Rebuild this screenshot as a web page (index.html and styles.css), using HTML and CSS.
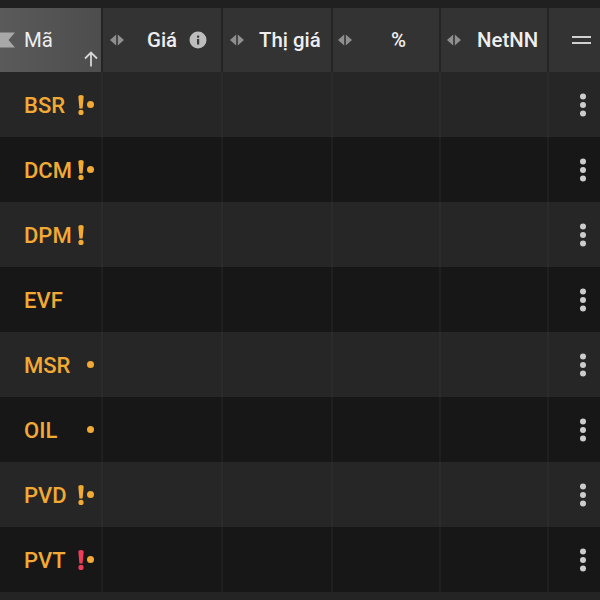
FILE: index.html
```html
<!DOCTYPE html>
<html>
    <head>
        <title>Watchlist</title>
        <link rel="stylesheet" href="styles.css">
    </head>
    <body>
        <div class="topbar"></div>
        <div class="table">
            <div class="head sorted">
                <svg class="flag" width="16" height="16" viewBox="0 0 16 16"><path d="M0 0.5H15L8.5 8L15 15.5H0Z" fill="#a8a8a8"/></svg>
                <span class="title">Mã</span>
                <svg class="up" width="16" height="16" viewBox="0 0 16 16"><path d="M8 15.5V1.5M2 7.5L8 1.5L14 7.5" fill="none" stroke="#d6d6d6" stroke-width="1.8"/></svg>
            </div>
            <div class="head gia">
                <svg class="move" width="14" height="12" viewBox="0 0 14 12"><path d="M6.2 0.5V11.5L0 6ZM7.8 0.5V11.5L14 6Z" fill="#8f8f8f"/></svg>
                <span class="title">Giá</span>
                <svg class="info" width="18" height="18" viewBox="0 0 18 18"><circle cx="9" cy="9" r="8.5" fill="#bdbdbd"/><rect x="8" y="8" width="2.2" height="5.5" fill="#3a3a3a"/><rect x="8" y="4.6" width="2.2" height="2.1" fill="#3a3a3a"/></svg>
            </div>
            <div class="head">
                <svg class="move" width="14" height="12" viewBox="0 0 14 12"><path d="M6.2 0.5V11.5L0 6ZM7.8 0.5V11.5L14 6Z" fill="#8f8f8f"/></svg>
                <span class="title">Thị giá</span>
            </div>
            <div class="head pct-col">
                <svg class="move" width="14" height="12" viewBox="0 0 14 12"><path d="M6.2 0.5V11.5L0 6ZM7.8 0.5V11.5L14 6Z" fill="#8f8f8f"/></svg>
                <span class="title">%</span>
            </div>
            <div class="head net-col">
                <svg class="move" width="14" height="12" viewBox="0 0 14 12"><path d="M6.2 0.5V11.5L0 6ZM7.8 0.5V11.5L14 6Z" fill="#8f8f8f"/></svg>
                <span class="title">NetNN</span>
            </div>
            <div class="head menu"><span class="bars"></span></div>

            <div class="cell code light"><span class="sym">BSR</span><svg class="bang" width="6" height="20" viewBox="0 0 6 20"><path d="M0.3 1.5Q0.3 0 3 0Q5.7 0 5.7 1.5L4.6 13.5H1.4ZM3 14.8A2.6 2.6 0 1 1 3 20A2.6 2.6 0 1 1 3 14.8Z"/></svg><span class="dot"></span></div>
            <div class="cell light"></div><div class="cell light"></div><div class="cell light"></div><div class="cell light"></div>
            <div class="cell more light"><span class="kebab"></span></div>

            <div class="cell code"><span class="sym">DCM</span><svg class="bang" width="6" height="20" viewBox="0 0 6 20"><path d="M0.3 1.5Q0.3 0 3 0Q5.7 0 5.7 1.5L4.6 13.5H1.4ZM3 14.8A2.6 2.6 0 1 1 3 20A2.6 2.6 0 1 1 3 14.8Z"/></svg><span class="dot"></span></div>
            <div class="cell"></div><div class="cell"></div><div class="cell"></div><div class="cell"></div>
            <div class="cell more"><span class="kebab"></span></div>

            <div class="cell code light"><span class="sym">DPM</span><svg class="bang" width="6" height="20" viewBox="0 0 6 20"><path d="M0.3 1.5Q0.3 0 3 0Q5.7 0 5.7 1.5L4.6 13.5H1.4ZM3 14.8A2.6 2.6 0 1 1 3 20A2.6 2.6 0 1 1 3 14.8Z"/></svg></div>
            <div class="cell light"></div><div class="cell light"></div><div class="cell light"></div><div class="cell light"></div>
            <div class="cell more light"><span class="kebab"></span></div>

            <div class="cell code"><span class="sym">EVF</span></div>
            <div class="cell"></div><div class="cell"></div><div class="cell"></div><div class="cell"></div>
            <div class="cell more"><span class="kebab"></span></div>

            <div class="cell code light"><span class="sym">MSR</span><span class="dot solo"></span></div>
            <div class="cell light"></div><div class="cell light"></div><div class="cell light"></div><div class="cell light"></div>
            <div class="cell more light"><span class="kebab"></span></div>

            <div class="cell code"><span class="sym">OIL</span><span class="dot solo"></span></div>
            <div class="cell"></div><div class="cell"></div><div class="cell"></div><div class="cell"></div>
            <div class="cell more"><span class="kebab"></span></div>

            <div class="cell code light"><span class="sym">PVD</span><svg class="bang" width="6" height="20" viewBox="0 0 6 20"><path d="M0.3 1.5Q0.3 0 3 0Q5.7 0 5.7 1.5L4.6 13.5H1.4ZM3 14.8A2.6 2.6 0 1 1 3 20A2.6 2.6 0 1 1 3 14.8Z"/></svg><span class="dot"></span></div>
            <div class="cell light"></div><div class="cell light"></div><div class="cell light"></div><div class="cell light"></div>
            <div class="cell more light"><span class="kebab"></span></div>

            <div class="cell code"><span class="sym">PVT</span><svg class="bang red" width="6" height="20" viewBox="0 0 6 20"><path d="M0.3 1.5Q0.3 0 3 0Q5.7 0 5.7 1.5L4.6 13.5H1.4ZM3 14.8A2.6 2.6 0 1 1 3 20A2.6 2.6 0 1 1 3 14.8Z"/></svg><span class="dot"></span></div>
            <div class="cell"></div><div class="cell"></div><div class="cell"></div><div class="cell"></div>
            <div class="cell more"><span class="kebab"></span></div>
        </div>
        <div class="bottombar"></div>
    </body>
</html>
```

FILE: styles.css
```css
html,
body {
    margin: 0;
    padding: 0;
    height: 600px;
    overflow: hidden;
    background-color: #171717;
    font-family: "Roboto", "Liberation Sans", sans-serif;
}

.topbar {
    height: 8px;
    background-color: #202020;
}

.bottombar {
    height: 8px;
    background-color: #242424;
}

.table {
    display: grid;
    grid-template-columns: 103px 120px 110px 108px 108px 51px;
    grid-template-rows: 64px repeat(8, 65px);
}

.head {
    display: flex;
    align-items: center;
    box-sizing: border-box;
    padding-left: 7px;
    background-color: #333333;
    border-right: 2px solid #242424;
}

.title {
    color: #eeeeee;
    font-size: 20.4px;
    font-weight: 500;
    margin-left: 15px;
}

.sorted {
    position: relative;
    padding-left: 24px;
    background: linear-gradient(90deg, #5a5a5a, #4d4d4d);
}

.sorted .title {
    margin-left: 0;
    font-weight: 400;
}

.flag {
    position: absolute;
    left: 0;
    top: 24px;
}

.up {
    position: absolute;
    right: 2px;
    top: 43px;
}

.gia .title {
    margin-left: 23px;
}

.info {
    margin-left: 12px;
}

.pct-col {
    padding-left: 5px;
}

.pct-col .title {
    margin-left: 39px;
}

.net-col {
    padding-left: 6px;
}

.net-col .title {
    margin-left: 16px;
}

.menu {
    padding-left: 23px;
    border-right: 0;
}

.bars {
    width: 19px;
    height: 4px;
    border-top: 2px solid #d0d0d0;
    border-bottom: 2px solid #d0d0d0;
}

.cell {
    box-sizing: border-box;
    background-color: #171717;
    border-right: 2px solid #1f1f1f;
}

.cell.light {
    background-color: #262626;
    border-right-color: #2b2b2b;
}

.code {
    display: flex;
    align-items: center;
    padding-left: 24px;
}

.sym {
    flex: none;
    margin-top: 1px;
    color: #f2aa35;
    font-size: 22px;
    font-weight: 500;
    width: 54px;
}

.bang {
    fill: #f2aa35;
}

.bang.red {
    fill: #ee3d57;
}

.dot {
    width: 7px;
    height: 7px;
    margin-left: 3px;
    border-radius: 50%;
    background-color: #f2aa35;
}

.dot.solo {
    margin-left: 9px;
}

.more {
    display: flex;
    align-items: center;
    padding-left: 31px;
    border-right: 0;
}

.kebab {
    width: 6px;
    height: 6px;
    border-radius: 50%;
    background-color: #cccccc;
    box-shadow: 0 -8.5px 0 #cccccc, 0 8.5px 0 #cccccc;
}
```
